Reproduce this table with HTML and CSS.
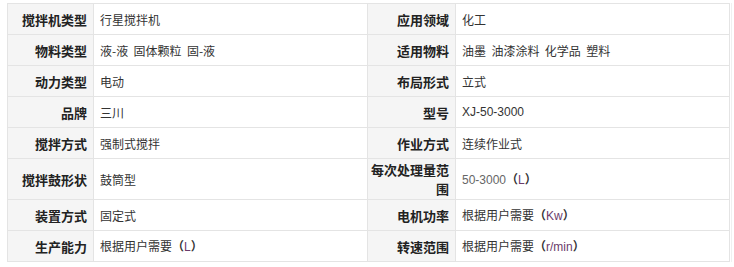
FILE: index.html
```html
<!DOCTYPE html>
<html lang="zh-CN">
<head>
    <meta charset="UTF-8">
    <title>产品参数</title>
    <link rel="stylesheet" href="styles.css">
</head>
<body>
    <div class="params-box">
        <table class="params">
            <colgroup>
                <col class="col-label">
                <col class="col-value">
                <col class="col-label wide">
                <col class="col-value">
            </colgroup>
            <tr>
                <th>搅拌机类型</th><td>行星搅拌机</td>
                <th>应用领域</th><td>化工</td>
            </tr>
            <tr>
                <th>物料类型</th><td>液-液&nbsp;&nbsp;固体颗粒&nbsp;&nbsp;固-液</td>
                <th>适用物料</th><td>油墨&nbsp;&nbsp;油漆涂料&nbsp;&nbsp;化学品&nbsp;&nbsp;塑料</td>
            </tr>
            <tr>
                <th>动力类型</th><td>电动</td>
                <th>布局形式</th><td>立式</td>
            </tr>
            <tr>
                <th>品牌</th><td>三川</td>
                <th>型号</th><td class="latin">XJ-50-3000</td>
            </tr>
            <tr>
                <th>搅拌方式</th><td>强制式搅拌</td>
                <th>作业方式</th><td>连续作业式</td>
            </tr>
            <tr>
                <th>搅拌鼓形状</th><td>鼓筒型</td>
                <th>每次处理量范围</th><td><span class="latin">50-3000</span><b class="paren">（</b><span class="unit">L</span><b class="paren">）</b></td>
            </tr>
            <tr>
                <th>装置方式</th><td>固定式</td>
                <th>电机功率</th><td>根据用户需要<b class="paren">（</b><span class="unit">Kw</span><b class="paren">）</b></td>
            </tr>
            <tr>
                <th>生产能力</th><td>根据用户需要<b class="paren">（</b><span class="unit">L</span><b class="paren">）</b></td>
                <th>转速范围</th><td>根据用户需要<b class="paren">（</b><span class="unit">r/min</span><b class="paren">）</b></td>
            </tr>
        </table>
    </div>
</body>
</html>
```

FILE: styles.css
```css
body {
    margin: 0;
    padding: 3px 0 0 7px;
    background: #fff;
    font-family: "Noto Sans CJK SC", "Liberation Sans", sans-serif;
    font-size: 12px;
    color: #333;
}

.params-box {
    width: 724px;
    border-right: 1px solid #f0f0f0;
}

.params {
    border-collapse: collapse;
    table-layout: fixed;
    width: 723px;
}

.col-label { width: 86px; }
.col-label.wide { width: 88px; }
.col-value { width: 274px; }

.params th,
.params td {
    height: 28px;
    padding: 1px 6px;
    border: 1px solid #e4e4e4;
    line-height: 19px;
    vertical-align: middle;
}

.params th {
    background: #f5f5f5;
    text-align: right;
    font-size: 13px;
    font-weight: bold;
    color: #222;
    padding-left: 2px;
}

.params td {
    text-align: left;
    color: #333;
    font-weight: normal;
}

.latin {
    font-family: "Liberation Sans", Arial, sans-serif;
    color: #666;
}

.paren {
    font-weight: bold;
    color: #333;
}

.unit {
    font-family: "Liberation Sans", Arial, sans-serif;
    color: #6b3b6b;
}
```
